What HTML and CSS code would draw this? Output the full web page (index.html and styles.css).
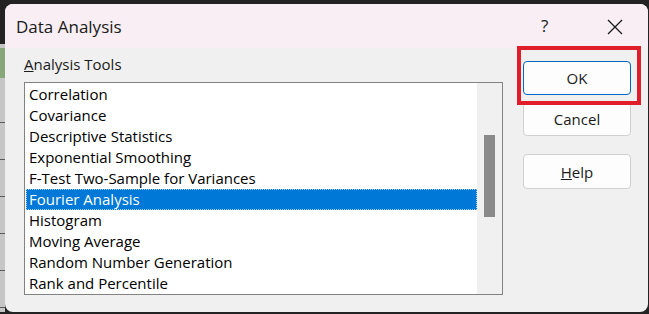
FILE: index.html
```html
<!DOCTYPE html>
<html lang="en">
<head>
  <meta charset="UTF-8" />
  <meta name="viewport" content="width=device-width, initial-scale=1.0" />
  <title>Data Analysis</title>
  <link rel="stylesheet" href="styles.css">
</head>
<body>

  <div class="screen">
    <div class="sheet-edge"></div>

    <div class="dialog">
      <div class="titlebar">
        <span class="title">Data Analysis</span>
        <span class="help-mark">?</span>
        <span class="close">
          <svg width="16" height="16" viewBox="0 0 16 16">
            <path d="M1 1 L15 15 M15 1 L1 15" stroke="#1b1b1b" stroke-width="1.3" fill="none" />
          </svg>
        </span>
      </div>

      <div class="content">
        <div class="tools">
          <div class="label"><u>A</u>nalysis Tools</div>
          <div class="listbox">
            <ul class="items">
              <li>Correlation</li>
              <li>Covariance</li>
              <li>Descriptive Statistics</li>
              <li>Exponential Smoothing</li>
              <li>F-Test Two-Sample for Variances</li>
              <li class="selected">Fourier Analysis</li>
              <li>Histogram</li>
              <li>Moving Average</li>
              <li>Random Number Generation</li>
              <li>Rank and Percentile</li>
            </ul>
            <div class="scrollbar">
              <div class="thumb"></div>
            </div>
          </div>
        </div>

        <div class="buttons">
          <button class="btn ok">OK</button>
          <button class="btn cancel">Cancel</button>
          <button class="btn help"><u>H</u>elp</button>
          <div class="highlight"></div>
        </div>
      </div>
    </div>
  </div>

</body>
</html>
```

FILE: styles.css
```css
* {
  box-sizing: border-box;
}

body {
  margin: 0;
  padding: 0;
  background: #232323;
  font-family: "Open Sans", "Noto Sans", sans-serif;
  overflow: hidden;
}

.screen {
  display: flex;
  height: 314px;
  padding-top: 4px;
  background: #232323;
}

.sheet-edge {
  width: 5px;
  height: 268px;
  margin-top: 40px;
  background:
    linear-gradient(#86a77a, #86a77a) 0 4px / 100% 30px no-repeat,
    repeating-linear-gradient(#c6c6c6 0, #c6c6c6 36px, #5a5a5a 36px, #5a5a5a 37px) 0 42px / 100% 100% no-repeat;
  background-color: #c6c6c6;
}

.dialog {
  width: 643px;
  height: 308px;
  background: #f0f0f0;
  border-radius: 8px;
  overflow: hidden;
  display: flex;
  flex-direction: column;
}

.titlebar {
  height: 44px;
  background: #f8eef3;
  display: flex;
  align-items: center;
  padding-left: 11px;
  color: #1a1a1a;
}

.title {
  font-size: 17px;
  flex: 1;
}

.help-mark {
  font-size: 17px;
  width: 66px;
  margin-top: -2px;
}

.close {
  width: 41px;
  display: flex;
  padding-top: 1px;
}

.content {
  flex: 1;
  display: flex;
  gap: 20px;
  padding: 6px 0 0 19px;
}

.tools {
  width: 479px;
}

.label {
  font-size: 15px;
  line-height: 20px;
  color: #1a1a1a;
  margin-bottom: 8px;
}

.listbox {
  height: 213px;
  border: 1px solid #828282;
  background: #fff;
  display: flex;
}

.items {
  list-style: none;
  margin: 0;
  padding: 1px 0 0 1px;
  flex: 1;
}

.items li {
  height: 21px;
  line-height: 21px;
  font-size: 15px;
  padding-left: 3px;
  color: #000;
  white-space: nowrap;
}

.items li.selected {
  background: #0078d7;
  color: #fff;
  outline: 1px dotted #a8cff0;
  outline-offset: -1px;
}

.scrollbar {
  width: 25px;
  background: #f0f0f0;
  padding: 52px 0 0 7px;
}

.thumb {
  width: 11px;
  height: 82px;
  background: #8a8a8a;
}

.buttons {
  position: relative;
  width: 108px;
  padding-top: 7px;
  display: flex;
  flex-direction: column;
}

.btn {
  height: 34px;
  background: #fdfdfd;
  border: 1px solid #d0d0d0;
  border-radius: 4px;
  font-family: inherit;
  font-size: 15px;
  color: #1a1a1a;
  padding: 0;
}

.btn.ok {
  border-color: #0067c0;
}

.btn.cancel {
  margin-top: 7px;
}

.btn.help {
  margin-top: 18px;
  height: 35px;
}

.highlight {
  position: absolute;
  left: -6px;
  top: -8px;
  width: 124px;
  height: 59px;
  border: 4px solid #e01e2a;
}
```
